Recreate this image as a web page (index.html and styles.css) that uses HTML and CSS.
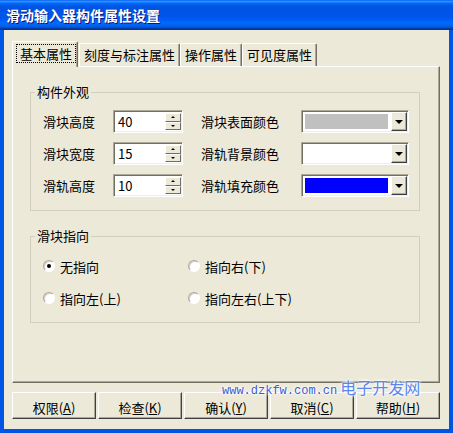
FILE: index.html
```html
<!DOCTYPE html>
<html lang="zh-CN">
  <head>
    <meta charset="UTF-8" />
    <title>滑动输入器构件属性设置</title>
    <link rel="stylesheet" href="styles.css">
  </head>
  <body>
    <div class="window">
      <div class="titlebar">
        <span class="title">滑动输入器构件属性设置</span>
      </div>

      <div class="client">
        <div class="tabs">
          <div class="tab active"><span class="focus">基本属性</span></div>
          <div class="tab">刻度与标注属性</div>
          <div class="tab">操作属性</div>
          <div class="tab">可见度属性</div>
        </div>

        <div class="panel">
          <fieldset class="group">
            <legend>构件外观</legend>
            <div class="grid">
              <span>滑块高度</span>
              <div class="spin">
                <span class="value">40</span>
                <div class="spin-btns"><span class="sb"><i class="up"></i></span><span class="sb"><i class="down"></i></span></div>
              </div>
              <span>滑块表面颜色</span>
              <div class="combo"><span class="swatch gray"></span><span class="drop"><i></i></span></div>

              <span>滑块宽度</span>
              <div class="spin">
                <span class="value">15</span>
                <div class="spin-btns"><span class="sb"><i class="up"></i></span><span class="sb"><i class="down"></i></span></div>
              </div>
              <span>滑轨背景颜色</span>
              <div class="combo"><span class="swatch white"></span><span class="drop"><i></i></span></div>

              <span>滑轨高度</span>
              <div class="spin">
                <span class="value">10</span>
                <div class="spin-btns"><span class="sb"><i class="up"></i></span><span class="sb"><i class="down"></i></span></div>
              </div>
              <span>滑轨填充颜色</span>
              <div class="combo"><span class="swatch blue"></span><span class="drop"><i></i></span></div>
            </div>
          </fieldset>

          <fieldset class="group second">
            <legend>滑块指向</legend>
            <div class="radios">
              <label class="option"><span class="radio checked"></span>无指向</label>
              <label class="option"><span class="radio"></span>指向右(下)</label>
              <label class="option"><span class="radio"></span>指向左(上)</label>
              <label class="option"><span class="radio"></span>指向左右(上下)</label>
            </div>
          </fieldset>
        </div>

        <div class="buttons">
          <button type="button">权限(<u>A</u>)</button>
          <button type="button">检查(<u>K</u>)</button>
          <button type="button">确认(<u>Y</u>)</button>
          <button type="button">取消(<u>C</u>)</button>
          <button type="button">帮助(<u>H</u>)</button>
        </div>
      </div>

      <div class="watermark"><span class="url">www.dzkfw.com.cn</span> <span class="site">电子开发网</span></div>
    </div>
  </body>
</html>
```

FILE: styles.css
```css
body {
  margin: 0;
  padding: 0;
  font-family: "Noto Sans CJK SC", "Liberation Sans", sans-serif;
  font-size: 13px;
  color: #000;
  background-color: #fff;
}

.window {
  position: relative;
  width: 453px;
  height: 433px;
  display: flex;
  flex-direction: column;
}

.titlebar {
  flex: none;
  height: 30px;
  display: flex;
  align-items: center;
  padding-left: 6px;
  background: linear-gradient(to bottom, #0058ee 0%, #3593ff 4%, #288eff 6%, #127dff 8%, #036ffc 10%, #0262ee 14%, #0057e5 20%, #0054e3 24%, #0055eb 56%, #005bf5 66%, #026afe 76%, #0062ef 86%, #0052d6 92%, #0040ab 94%, #003092 100%);
}

.title {
  color: #fff;
  font-weight: bold;
  font-size: 14px;
  line-height: 16px;
  text-shadow: 1px 1px 0 #0a1883;
}

.client {
  flex: 1;
  display: flex;
  flex-direction: column;
  padding: 11px 9px 10px 8px;
  background-color: #ece9d8;
  border: 4px solid #0055e5;
  border-top: none;
}

/* tabs */
.tabs {
  display: flex;
  align-items: flex-end;
  height: 25px;
}

.tab {
  height: 23px;
  box-sizing: border-box;
  display: flex;
  align-items: center;
  padding: 0 4px 2px 4px;
  border-top: 1px solid #fff;
  border-left: 1px solid #fff;
  border-right: 1px solid #716f64;
  box-shadow: inset -1px 0 0 #aca899;
  border-radius: 2px 2px 0 0;
  background-color: #ece9d8;
  white-space: nowrap;
}

.tab.active {
  position: relative;
  z-index: 1;
  height: 26px;
  margin-bottom: -1px;
  margin-right: 1px;
  padding: 0 1px 3px 3px;
}

.focus {
  border: 1px dotted #000;
  padding: 0 3px;
  line-height: 17px;
}

.panel {
  height: 317px;
  box-sizing: border-box;
  padding: 17px 19px 0 17px;
  border-top: 1px solid #fff;
  border-left: 1px solid #fff;
  border-right: 1px solid #716f64;
  border-bottom: 1px solid #716f64;
  box-shadow: inset -1px -1px 0 #aca899;
}

/* group boxes */
.group {
  margin: 0;
  padding: 10px 0 13px 12px;
  border: 1px solid #d0d0bf;
  border-radius: 0;
}

.group legend {
  margin-left: -8px;
  padding: 0 2px;
  line-height: 16px;
}

.group.second {
  margin-top: 17px;
  padding: 12px 0 14px 12px;
}

.grid {
  display: grid;
  grid-template-columns: 70px 88px 100px 108px;
  grid-auto-rows: 23px;
  row-gap: 9px;
  align-items: center;
}

.spin {
  width: 70px;
  height: 23px;
  box-sizing: border-box;
  display: flex;
  padding: 1px 0 1px 2px;
  background-color: #fff;
  border: 1px solid;
  border-color: #aca899 #fff #fff #aca899;
  box-shadow: inset 1px 1px 0 #716f64, inset -1px -1px 0 #f1efe2;
}

.value {
  flex: 1;
  line-height: 19px;
  padding-left: 2px;
}

.spin-btns {
  width: 16px;
  display: flex;
  flex-direction: column;
  justify-content: space-between;
  padding: 1px 1px 1px 0;
}

.sb {
  height: 8px;
  display: flex;
  align-items: center;
  justify-content: center;
  background-color: #ece9d8;
  border: 1px solid;
  border-color: #fff #716f64 #716f64 #fff;
}

.sb i {
  width: 0;
  height: 0;
  border-left: 2px solid transparent;
  border-right: 2px solid transparent;
}

.sb .up {
  border-bottom: 2px solid #000;
}

.sb .down {
  border-top: 2px solid #000;
}

.combo {
  width: 108px;
  height: 23px;
  box-sizing: border-box;
  display: flex;
  gap: 3px;
  padding: 3px 1px 1px 3px;
  background-color: #fff;
  border: 1px solid;
  border-color: #aca899 #fff #fff #aca899;
  box-shadow: inset 1px 1px 0 #716f64, inset -1px -1px 0 #f1efe2;
}

.swatch {
  flex: 1;
  height: 15px;
}

.swatch.gray {
  background-color: #c0c0c0;
}

.swatch.white {
  background-color: #fff;
}

.swatch.blue {
  background-color: #0000ff;
}

.drop {
  width: 16px;
  height: 19px;
  margin-top: -2px;
  box-sizing: border-box;
  display: flex;
  align-items: center;
  justify-content: center;
  background-color: #ece9d8;
  border: 1px solid;
  border-color: #fff #404040 #404040 #fff;
  box-shadow: inset -1px -1px 0 #aca899;
}

.drop i {
  width: 0;
  height: 0;
  border-left: 4px solid transparent;
  border-right: 4px solid transparent;
  border-top: 4px solid #000;
}

/* radio buttons */
.radios {
  display: grid;
  grid-template-columns: 145px auto;
  grid-auto-rows: 20px;
  row-gap: 12px;
  align-items: center;
}

.option {
  display: flex;
  align-items: center;
  gap: 5px;
}

.radio {
  width: 12px;
  height: 12px;
  box-sizing: border-box;
  display: flex;
  align-items: center;
  justify-content: center;
  border-radius: 50%;
  background-color: #fff;
  border: 1px solid;
  border-color: #aca899 #fff #fff #aca899;
  box-shadow: inset 1px 1px 0 #d4d0c8;
}

.radio.checked::after {
  content: "";
  width: 4px;
  height: 4px;
  border-radius: 50%;
  background-color: #000;
}

/* bottom buttons */
.buttons {
  display: flex;
  gap: 2px;
  margin-top: 9px;
}

.buttons button {
  width: 84px;
  height: 27px;
  padding: 4px 0 0;
  font-family: inherit;
  font-size: 13px;
  line-height: 14px;
  color: #000;
  background-color: #ece9d8;
  border: 1px solid;
  border-color: #fff #404040 #404040 #fff;
  box-shadow: inset -1px -1px 0 #aca899;
  border-radius: 0;
}

.watermark {
  position: absolute;
  left: 222px;
  top: 380px;
  line-height: 15px;
  white-space: nowrap;
  text-shadow: 0 0 2px #fff, 0 0 3px #fff, 0 0 4px #fff;
}

.url {
  font-family: "Liberation Mono", monospace;
  font-size: 12px;
  color: #3b5bd6;
}

.site {
  font-size: 16px;
  color: #5a86ee;
}
```
